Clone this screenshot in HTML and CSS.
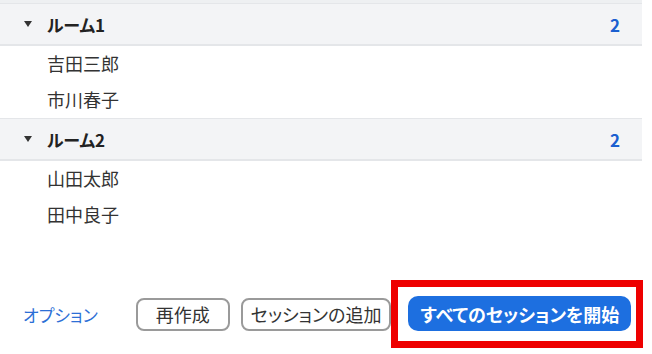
FILE: index.html
```html
<!DOCTYPE html>
<html lang="ja">
<head>
  <meta charset="UTF-8" />
  <meta name="viewport" content="width=device-width, initial-scale=1.0"/>
  <title>ブレイクアウトルーム</title>
  <link rel="stylesheet" href="styles.css">
</head>
<body>
  <div class="rooms">
    <div class="room-head">
      <span class="caret"></span>
      <span class="room-name">ルーム1</span>
      <span class="count">2</span>
    </div>
    <div class="member">吉田三郎</div>
    <div class="member">市川春子</div>

    <div class="room-head">
      <span class="caret"></span>
      <span class="room-name">ルーム2</span>
      <span class="count">2</span>
    </div>
    <div class="member">山田太郎</div>
    <div class="member">田中良子</div>
  </div>

  <div class="footer">
    <a class="options" href="#">オプション</a>
    <button class="btn">再作成</button>
    <button class="btn btn-add">セッションの追加</button>
    <div class="highlight">
      <button class="btn-primary">すべてのセッションを開始</button>
    </div>
  </div>
</body>
</html>
```

FILE: styles.css
```css
body {
  margin: 0;
  font-family: "Noto Sans CJK JP", "Noto Sans", sans-serif;
  font-feature-settings: "palt";
  color: #333;
  background: #fff;
}
.rooms {
  width: 642px;
  border-top: 3px solid #eef0f2;
}
.room-head {
  display: flex;
  align-items: center;
  height: 40px;
  padding: 0 22px 0 24px;
  background: #f3f4f6;
  border-top: 1px solid #e4e6e9;
  border-bottom: 2px solid #e4e6e9;
}
.caret {
  width: 0;
  height: 0;
  border-left: 4px solid transparent;
  border-right: 4px solid transparent;
  border-top: 6px solid #333;
  margin-right: 15px;
}
.room-name {
  flex: 1;
  font-size: 17px;
  font-weight: bold;
  color: #222;
}
.count {
  font-size: 17px;
  font-weight: bold;
  color: #1a5fd0;
}
.member {
  height: 36px;
  line-height: 34px;
  padding-left: 47px;
  font-size: 18px;
}
.footer {
  display: flex;
  align-items: center;
  margin-top: 47px;
  padding-left: 23px;
  white-space: nowrap;
}
.footer > * {
  flex-shrink: 0;
}
.options {
  font-size: 17px;
  color: #2d6fd6;
  text-decoration: none;
  margin-right: 38px;
}
.btn {
  height: 33px;
  padding: 0 18px;
  font-family: inherit;
  font-feature-settings: "palt";
  font-size: 18px;
  color: #333;
  background: #fff;
  border: 2px solid #9a9a9a;
  border-radius: 8px;
  margin-right: 11px;
}
.btn-add {
  padding: 0 8px;
  margin-right: 0;
}
.highlight {
  border: 7px solid #ee0000;
  padding: 9px 5px 10px 10px;
}
.btn-primary {
  height: 35px;
  padding: 0 12px;
  font-family: inherit;
  font-feature-settings: "palt";
  font-size: 18px;
  font-weight: bold;
  color: #fff;
  background: #1d6fe0;
  border: none;
  border-radius: 10px;
}
```
